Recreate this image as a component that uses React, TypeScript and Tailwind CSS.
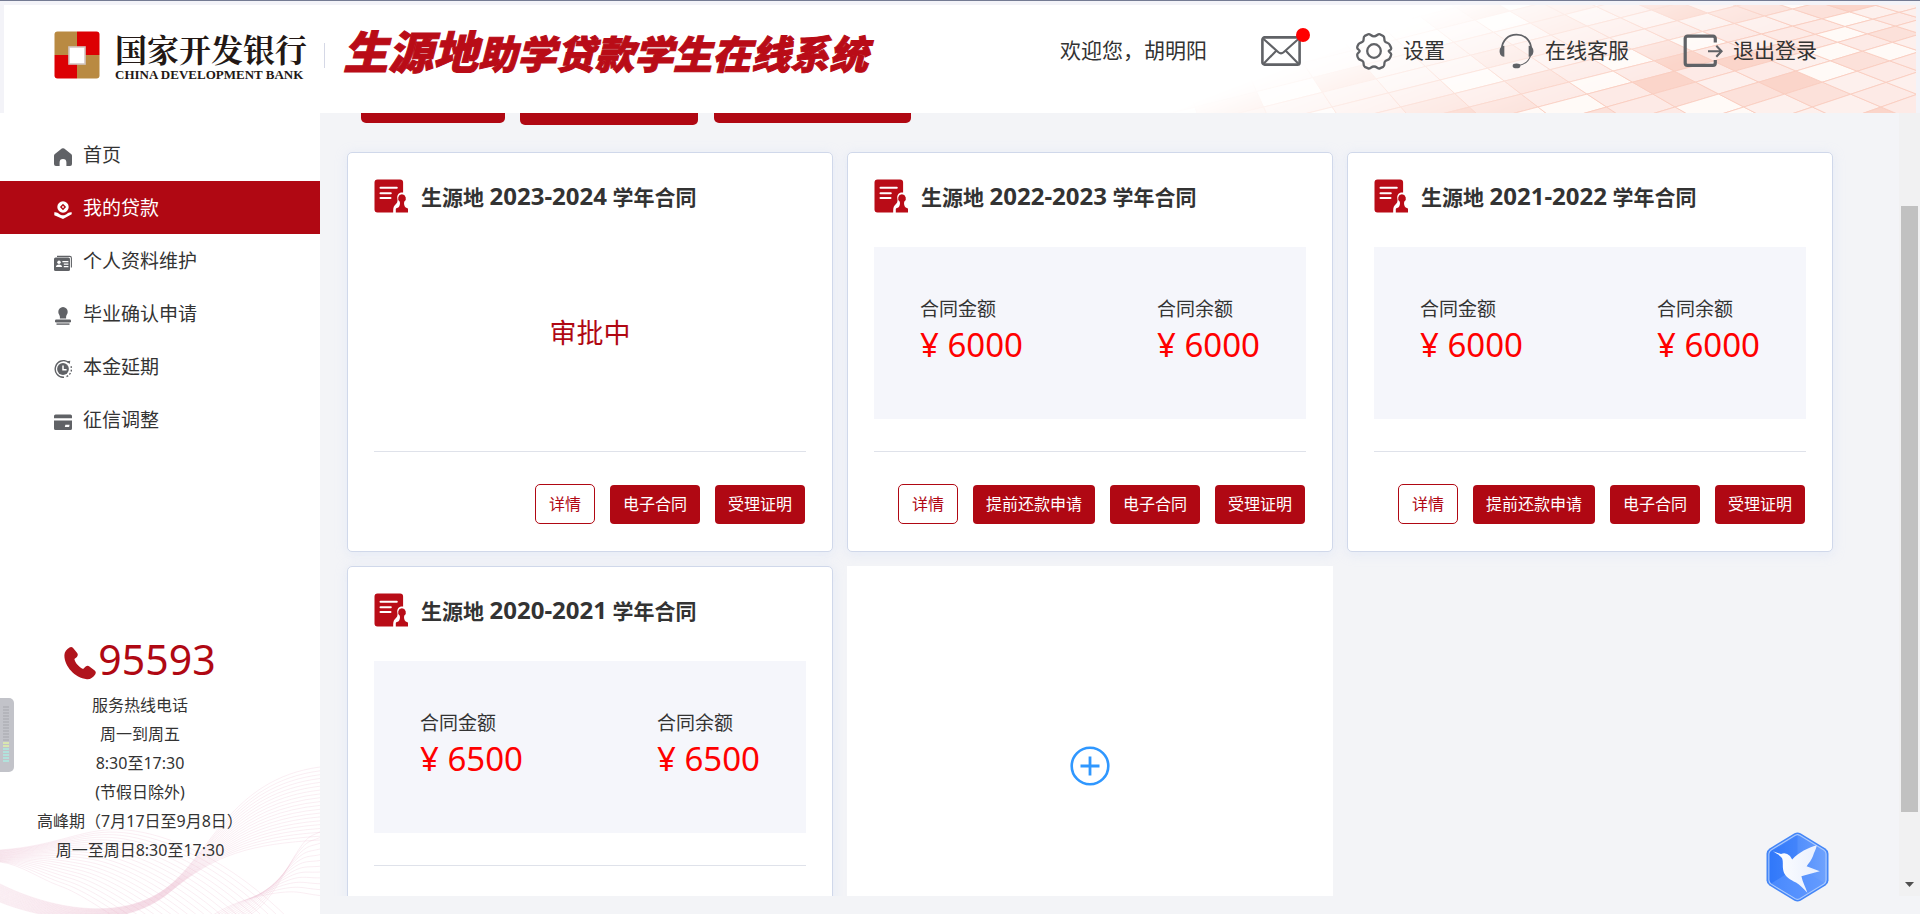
import React from "react";

const SANS =
  "font-['Noto_Sans','Noto_Sans_CJK_SC',sans-serif]";

type IconProps = { className?: string };

function BankLogo() {
  return (
    <svg viewBox="0 0 46 48" className="h-12 w-[46px] shrink-0" aria-hidden="true">
      <defs>
        <clipPath id="logoClip">
          <rect x="0.5" y="0.5" width="45" height="47" rx="3" />
        </clipPath>
      </defs>
      <g clipPath="url(#logoClip)">
        <rect width="23" height="24" fill="#b98a42" />
        <rect x="23" width="23" height="24" fill="#dc0003" />
        <rect y="24" width="23" height="24" fill="#dc0003" />
        <rect x="23" y="24" width="23" height="24" fill="#b98a42" />
      </g>
      <rect x="15" y="16" width="16" height="17" fill="#fff" stroke="#d3c6c2" strokeWidth="1.6" />
    </svg>
  );
}

function MailIcon() {
  return (
    <svg viewBox="0 0 40 30" className="h-[30px] w-10" fill="none" stroke="#606266" strokeWidth="2.6" aria-hidden="true">
      <rect x="1.4" y="1.4" width="37.2" height="27.2" rx="2.2" />
      <path d="M2 2.5 17.4 16.2q2.6 2.2 5.2 0L38 2.5M2.3 28 15 15M37.7 28 25 15" strokeWidth="2.1" />
    </svg>
  );
}

function GearIcon() {
  return (
    <svg viewBox="0 0 38 38" className="h-[38px] w-[38px]" fill="none" stroke="#606266" strokeWidth="2.3" strokeLinejoin="round" aria-hidden="true">
      <path d="M13.2 2.2C15.2 1.4 16 4.3 19 4.3s3.800-2.900 5.800-2.100l3.400 1.800c2 1.400.6 3.400 1.600 5.200s3.600 1.400 4.700 3.300c.9 1.600 1.500 2.500 1.700 3.800.2 2.100-2.500 1.700-2.500 2.700s2.700 2.100 2.500 3.700c-.2 1.500-.8 2.600-1.700 4-1.100 1.800-3.700 1.200-4.700 3s.4 3.900-1.600 5.200l-3.400 1.500c-2 .8-2.800-1.900-5.800-1.900s-3.800 2.700-5.800 1.900l-3.400-1.500c-2-1.300-.6-3.400-1.600-5.200s-3.600-1.200-4.700-3c-.9-1.400-1.300-2.500-1.300-4 0-1.600 2.500-2.500 2.500-3.700s-2.500-1.600-2.500-3.200c0-1.400.5-2.300 1.300-3.600 1.100-1.800 3.700-1.400 4.700-3.100s-.4-3.700 1.600-5.200z" />
      <circle cx="19" cy="19" r="6.8" />
    </svg>
  );
}

function HeadsetIcon() {
  return (
    <svg viewBox="0 0 36 36" className="h-9 w-[35px]" fill="none" stroke="#606266" aria-hidden="true">
      <path d="M3 16C3 7 9.500 1.200 18 1.200S33 7 33 16" strokeWidth="1.900" />
      <path d="M32.500 22.500C31 28 27 31.500 20.500 33" strokeWidth="1.100" />
      <path d="M5.500 12.500v11.300C2 24 .6 21 .6 18s1.600-5.300 4.900-5.500zM30.500 12.500v11.300c3.500.2 4.900-2.800 4.900-5.800s-1.600-5.300-4.900-5.500z" fill="#606266" stroke="none" />
      <ellipse cx="18" cy="33.300" rx="4" ry="2.400" fill="#606266" stroke="none" />
    </svg>
  );
}

function LogoutIcon() {
  return (
    <svg viewBox="0 0 40 34" className="h-[34px] w-10" fill="none" stroke="#606266" aria-hidden="true">
      <path d="M32.300 8.500V4.500Q32.300 2.200 30 2.200H4.500Q2.200 2.200 2.200 4.500v24.600q0 2.300 2.300 2.300H30q2.300 0 2.300-2.300V26" strokeWidth="3.200" />
      <path d="M25 17.300h13M33.300 11.800l5.300 5.500-5.300 5.500" strokeWidth="2.100" />
    </svg>
  );
}

function HomeIcon({ className }: IconProps) {
  return (
    <svg viewBox="0 0 18 18" className={className} fill="currentColor" aria-hidden="true">
      <path d="M7.800.6q1.200-.9 2.400 0l6.900 5.300q.9.700.9 1.800v8.300q0 2-2 2h-3.600v-3.600a3.400 3.400 0 0 0-6.800 0V18H2q-2 0-2-2V7.700q0-1.100.9-1.800z" />
    </svg>
  );
}
function LoanIcon({ className }: IconProps) {
  return (
    <svg viewBox="0 0 18 18" className={className} fill="currentColor" aria-hidden="true">
      <path fillRule="evenodd" d="M9 .3a5.700 5.700 0 1 1 0 11.400A5.700 5.700 0 0 1 9 .3zm0 2.500L5.900 6l3.100 3.200L12.100 6z" />
      <path d="M9 4.800 10.200 6 9 7.200 7.800 6z" />
      <path d="M.3 11.300c2.400-.3 3.600.6 4.900 1.700 2.200 1.800 5.400 1.800 7.600 0 1.300-1.100 2.500-2 4.900-1.700v1.900L9 17.900.3 14.200z" />
    </svg>
  );
}
function IdCardIcon({ className }: IconProps) {
  return (
    <svg viewBox="0 0 18 18" className={className} aria-hidden="true">
      <path d="M3 2.400h12.800q1.600 0 1.600 1.600v9.500" fill="none" stroke="currentColor" strokeWidth="1.100" />
      <rect y="3.600" width="16" height="13.400" rx="1.600" fill="currentColor" />
      <g fill="#fff">
        <circle cx="5" cy="8.300" r="1.700" />
        <path d="M1.900 13q.2-2.600 3.100-2.600T8.100 13z" />
        <path d="M8.400 7h6v1.200h-6zM9.800 9.500h4.600v1.200H9.800zM9.800 12h4.600v1.200H9.800z" />
      </g>
    </svg>
  );
}
function StampIcon({ className }: IconProps) {
  return (
    <svg viewBox="0 0 18 18" className={className} fill="currentColor" aria-hidden="true">
      <path d="M9 0a4.900 4.900 0 0 1 4.700 5c0 2.200-1.600 3.200-1.600 4.800v1.700H5.900V9.800C5.900 8.200 4.300 7.200 4.300 5A4.900 4.900 0 0 1 9 0z" />
      <rect x="1" y="12.500" width="16" height="3" rx="1.200" />
      <rect x="2.500" y="16.400" width="13" height="1.400" />
    </svg>
  );
}
function DelayIcon({ className }: IconProps) {
  return (
    <svg viewBox="0 0 18 18" className={className} aria-hidden="true">
      <path d="M14.800 2.600A8.300 8.300 0 1 0 10 17.300" fill="none" stroke="currentColor" strokeWidth="1.400" />
      <path d="M13 1.200 16.300.700l-.6 3.400z" fill="currentColor" />
      <path d="M17 6.200A8.300 8.300 0 0 1 11 17.100" fill="none" stroke="currentColor" strokeWidth="1.400" strokeDasharray="1.800 1.700" />
      <circle cx="9" cy="9" r="5.900" fill="currentColor" />
      <path d="M9 5.500v4.300h3.600" fill="none" stroke="#fff" strokeWidth="1.500" />
    </svg>
  );
}
function CreditIcon({ className }: IconProps) {
  return (
    <svg viewBox="0 0 18 18" className={className} fill="currentColor" aria-hidden="true">
      <path d="M1.600 1.500h14.800q1.600 0 1.600 1.600v2.200H0V3.100q0-1.600 1.600-1.600z" />
      <path fillRule="evenodd" d="M0 7.500h18v7.900q0 1.600-1.600 1.600H1.600Q0 17 0 15.400zm11.400 4.300-.6 2.300h4.300l.5-2.300z" />
    </svg>
  );
}

function ContractIcon() {
  return (
    <svg viewBox="0 0 34 34" className="h-[34px] w-[34px] shrink-0" aria-hidden="true">
      <path d="M3.500.4h22.600q3 0 3 3v10.200c-3.900-.6-6.500 2.200-5.700 6.200.5 3.200-.4 4.600-2.600 6.400-1.500 1.300-1.700 4-1.600 7.400H3.500q-3 0-3-3V3.400q0-3 3-3z" fill="#b90c17" />
      <path d="M6.500 8.700h16.300M6.500 14.200h10.300M6.500 19h10" stroke="#fff" strokeWidth="2" strokeLinecap="round" />
      <path d="M27.900 15.300a4.100 4.100 0 0 1 2.300 7.400c-.5 2.200.2 4.600 1.500 5.700l1.900.9q.4.300.4.900v3.400H21.800v-3.400q0-.6.5-.9l2-.9c1.400-1.100 2-3.500 1.500-5.700a4.100 4.100 0 0 1 2.100-7.400z" fill="#b90c17" />
    </svg>
  );
}

function PhoneIcon() {
  return (
    <svg viewBox="0 0 32 33" className="mt-2 h-[33px] w-8 shrink-0" aria-hidden="true">
      <path d="M5.500.6q2-1.300 3.800.7l3.900 4.800q1.300 2-.3 3.800l-2.500 2.200c.7 3.900 4.700 8.400 8.700 9.800l2.600-2.300q1.800-1.500 3.700-.2l5.300 4q1.800 1.700.6 3.900c-1.800 3-5 5.300-8.400 5C10.500 30.800 0 19 .4 8 .5 5 2.600 2.300 5.500.6z" fill="#b0141c" />
    </svg>
  );
}

function BirdBadge() {
  return (
    <svg viewBox="0 0 63 70" className="h-[70px] w-[63px]" aria-hidden="true">
      <defs>
        <linearGradient id="hexFill" x1="0" x2="1">
          <stop offset="0" stopColor="#337bfb" />
          <stop offset="1" stopColor="#6fa2fd" />
        </linearGradient>
        <linearGradient id="birdFill" x1="0" x2="1">
          <stop offset="0" stopColor="#ffffff" />
          <stop offset="1" stopColor="#e8effe" />
        </linearGradient>
      </defs>
      <path d="M28.500 1.200q3-1.500 6 0l25 15.200q3 2 3 5.300v26.500q0 3.300-3 5.300l-25 15.300q-3 1.500-6 0l-25-15.300q-3-2-3-5.300V21.700q0-3.300 3-5.300z" fill="#4486f7" />
      <path d="M29.300 3.200q2.200-1 4.400 0l24.200 14.700q2.200 1.500 2.200 4v26.100q0 2.500-2.200 4L33.700 66.800q-2.200 1-4.400 0L5.100 52q-2.200-1.500-2.200-4V21.900q0-2.500 2.200-4z" fill="url(#hexFill)" stroke="#a9c8fd" strokeWidth="1.200" />
      <path d="M31.500 3v32L5 51.500 3.500 48V21.500z" fill="#2c74f8" opacity=".35" />
      <path d="M31.500 35 58 51 31.500 67 5 51.500z" fill="#5b95ff" opacity=".5" />
      <path d="M6.800 19.300 15 22q5-2 9 2l2.200 3.500C33 20 42 16 50.800 13.300c-.6 4-2.800 7-3.800 10.700-1.500 4-4 7-6.400 10.200L53.800 39.300c-6.500 1.800-12.500 3-18.400 5 1.200 6 4 10.500 6 16.400C37.500 56.500 34 53 30 50.500c-6-3-10.500-5.500-12.300-10.500C16 34.500 17.500 31 16.300 26.800 14.500 23 10 21.500 6.800 19.300z" fill="url(#birdFill)" />
    </svg>
  );
}

/** Perspective tile pattern on the right of the header. */
function TilePattern() {
  // Two families of lines leave the baseline y = 102 at regular steps; each tile
  // corner is the crossing of one line of each family.
  const base = (n: number) => 45 + 68.6 * n;
  const corner = (i: number, j: number): [number, number] => {
    const xa = base(i);
    const xb = base(j);
    const m = 0.66 + 0.0031 * Math.max(-100, xa - 182);
    const s = Math.max(0.25, 0.26 + 0.00026 * (xb - 380));
    const x = (xa + s * m * xb) / (1 + s * m);
    return [Math.round(x * 10) / 10, Math.round((102 - s * (x - xb)) * 10) / 10];
  };
  const cells: React.ReactElement[] = [];
  for (let j = -9; j < 13; j++) {
    for (let i = Math.max(j - 2, -2); i < 32; i++) {
      const q = [corner(i, j), corner(i + 1, j), corner(i + 1, j + 1), corner(i, j + 1)];
      const n = Math.abs(Math.sin(i * 12.9898 + j * 78.233) * 43758.5453);
      const h = Math.floor((n - Math.floor(n)) * 14);
      const fill =
        h === 0 ? "#fbd5ca" : h < 3 ? "#fce1da" : h < 7 ? "#fdeae6" : h < 11 ? "#fdf0ed" : "#fffaf7";
      cells.push(
        <polygon key={`${i}/${j}`} points={q.map((p) => p.join(",")).join(" ")} fill={fill} stroke="#f9cdbf" strokeWidth="0.9" />
      );
    }
  }
  return (
    <svg viewBox="0 0 766 108" className="absolute right-0 top-0 h-full w-[766px]" preserveAspectRatio="none" aria-hidden="true">
      <defs>
        <linearGradient id="tileFade" gradientUnits="userSpaceOnUse" x1="38" y1="98" x2="88" y2="228">
          <stop offset="0" stopColor="#000" />
          <stop offset="1" stopColor="#fff" />
        </linearGradient>
        <mask id="tileMask" maskUnits="userSpaceOnUse" x="0" y="0" width="766" height="108">
          <rect width="766" height="108" fill="url(#tileFade)" />
        </mask>
      </defs>
      <g mask="url(#tileMask)">{cells}</g>
    </svg>
  );
}

/** Draws lines evenly spread between two curves given as "x y" number lists. */
function blend(from: number[], to: number[], t: number) {
  const p = from.map((v, n) => Math.round((v + (to[n] - v) * t) * 10) / 10);
  return `M${p[0]} ${p[1]}C${p[2]} ${p[3]} ${p[4]} ${p[5]} ${p[6]} ${p[7]}S${p[8]} ${p[9]} ${p[10]} ${p[11]}`;
}

const waveBundles = [
  {
    count: 22,
    from: [0, 116, 60, 112, 85, 92, 127, 96, 230, 126, 290, 186],
    to: [0, 128, 20, 130, 40, 145, 60, 152, 110, 180, 140, 200],
  },
  {
    count: 20,
    from: [0, 150, 50, 175, 120, 188, 165, 155, 230, 45, 320, 33],
    to: [0, 168, 50, 188, 125, 196, 170, 158, 250, 110, 320, 106],
  },
  {
    count: 12,
    from: [230, 190, 260, 180, 270, 165, 290, 130, 310, 105, 325, 95],
    to: [200, 190, 220, 175, 240, 165, 270, 160, 300, 160, 325, 162],
  },
];

function Waves() {
  return (
    <svg viewBox="0 0 320 180" className="absolute bottom-0 left-0 h-[180px] w-full" preserveAspectRatio="none" fill="none" stroke="#e8b0c8" strokeOpacity="0.28" strokeWidth="0.8" aria-hidden="true">
      {waveBundles.map(({ count, from, to }, b) =>
        Array.from({ length: count }, (_, k) => <path key={`${b}-${k}`} d={blend(from, to, k / (count - 1))} />)
      )}
    </svg>
  );
}

const navItems = [
  { label: "首页", Icon: HomeIcon, active: false },
  { label: "我的贷款", Icon: LoanIcon, active: true },
  { label: "个人资料维护", Icon: IdCardIcon, active: false },
  { label: "毕业确认申请", Icon: StampIcon, active: false },
  { label: "本金延期", Icon: DelayIcon, active: false },
  { label: "征信调整", Icon: CreditIcon, active: false },
];

type Contract = { years: string; amount: string | null; actions: string[] };

const contracts: Contract[] = [
  { years: "2023-2024", amount: null, actions: ["电子合同", "受理证明"] },
  { years: "2022-2023", amount: "6000", actions: ["提前还款申请", "电子合同", "受理证明"] },
  { years: "2021-2022", amount: "6000", actions: ["提前还款申请", "电子合同", "受理证明"] },
  { years: "2020-2021", amount: "6500", actions: [] },
];

function Header() {
  return (
    <header className="shrink-0 border-t border-[#747b93] bg-[#f3f3f8] pt-1 pr-1">
      <div className="relative ml-1 flex h-[108px] items-center justify-between bg-white pl-[50px] pr-[99px]">
        <TilePattern />
        <div className="relative flex items-center pb-2">
          <BankLogo />
          <div className="ml-[15px] flex flex-col">
            <span className="font-['Noto_Serif_CJK_SC','Noto_Sans_CJK_SC',serif] text-[32px] leading-[40px] font-bold text-[#231815]">
              国家开发银行
            </span>
            <span className="font-['Liberation_Serif',serif] text-[13px] leading-[14px] font-bold text-[#231815]">
              CHINA DEVELOPMENT BANK
            </span>
          </div>
          <span className="ml-[17px] h-[25px] w-px bg-[#d5d8e6]" />
          <h1 className="ml-[18px] flex items-baseline pb-2 font-['Noto_Sans_CJK_SC',sans-serif] leading-[48px] font-black whitespace-nowrap text-[#b90c17] italic [-webkit-text-stroke:1px_#b90c17]">
            <span className="text-[45px]">生源地</span>
            <span className="text-[39px]">助学贷款学生在线系统</span>
          </h1>
        </div>
        <nav className="relative flex items-center gap-[54px] pb-4 text-[21px] whitespace-nowrap text-[#333]">
          <span>欢迎您，胡明阳</span>
          <a href="#mail" aria-label="消息" className="relative">
            <MailIcon />
            <span className="absolute -top-2 -right-[9px] size-[14px] rounded-full bg-[#ff0000]" />
          </a>
          <a href="#settings" className="flex items-center gap-[10px]">
            <GearIcon />
            设置
          </a>
          <a href="#service" className="flex items-center gap-[11px]">
            <HeadsetIcon />
            在线客服
          </a>
          <a href="#logout" className="flex items-center gap-[10px]">
            <LogoutIcon />
            退出登录
          </a>
        </nav>
      </div>
    </header>
  );
}

function Sidebar() {
  return (
    <aside className="relative flex w-80 shrink-0 flex-col justify-between overflow-hidden bg-white pt-[15px] pb-[49px]">
      <Waves />
      <nav className="relative flex flex-col">
        {navItems.map(({ label, Icon, active }) => (
          <a
            key={label}
            href="#menu"
            className={
              active
                ? "flex h-[53px] items-center gap-[11px] bg-[#b00813] pt-[2px] pl-[54px] text-[19px] text-white"
                : "flex h-[53px] items-center gap-[11px] pt-[2px] pl-[54px] text-[19px] text-[#333]"
            }
          >
            <Icon className={active ? "mt-[2px] size-[18px] text-white" : "mt-[2px] size-[18px] text-[#606266]"} />
            {label}
          </a>
        ))}
      </nav>
      <div className="relative flex w-[280px] flex-col items-center text-[16px] leading-[29px] text-[#333]">
        <div className="mb-1 flex items-center gap-[2px] text-[41px] leading-[56px] text-[#b00813]">
          <PhoneIcon />
          <span>95593</span>
        </div>
        <p>服务热线电话</p>
        <p>周一到周五</p>
        <p>8:30至17:30</p>
        <p>(节假日除外)</p>
        <p>高峰期（7月17日至9月8日）</p>
        <p>周一至周日8:30至17:30</p>
      </div>
      <div className="absolute top-[585px] left-0 flex h-[74px] w-[14px] flex-col items-start gap-px rounded-r-[5px] bg-[#c2c3c9] pt-2 pl-[3px]">
        {Array.from({ length: 19 }, (_, i) => (
          <span
            key={i}
            className={
              i < 12 ? "h-[2px] w-[6px] bg-[#b4b5bb]" : i < 14 ? "h-[2px] w-[6px] bg-[#d9e6b0]" : "h-[2px] w-[6px] bg-[#b2e2dc]"
            }
          />
        ))}
      </div>
    </aside>
  );
}

function Amount({ label, value }: { label: string; value: string }) {
  return (
    <div className="flex flex-col">
      <span className="text-[19px] leading-7 text-[#333]">{label}</span>
      <span className="text-[33px] leading-[44px] text-[#ff0000]">¥ {value}</span>
    </div>
  );
}

function ContractCard({ years, amount, actions }: Contract) {
  return (
    <article className="flex h-[400px] flex-col rounded-[5px] border border-[#d0d8ea] bg-white px-[26px] pt-[26px] shadow-[0_2px_12px_rgba(200,215,245,0.35)]">
      <div className="flex h-[34px] items-center gap-[13px]">
        <ContractIcon />
        <h2 className="text-[21px] leading-[34px] font-bold whitespace-nowrap text-[#333]">
          生源地 <span className="text-[24px]">{years}</span> 学年合同
        </h2>
      </div>
      {amount ? (
        <div className="mt-[34px] flex h-[172px] items-center justify-between bg-[#f5f6fb] pr-[46px] pb-[4px] pl-[46px]">
          <Amount label="合同金额" value={amount} />
          <Amount label="合同余额" value={amount} />
        </div>
      ) : (
        <div className="mt-[34px] flex h-[172px] items-center justify-center text-[27px] text-[#b00813]">审批中</div>
      )}
      <hr className="mt-8 border-t border-[#dfe2ea]" />
      {actions.length > 0 && (
        <div className="mt-8 flex items-center justify-end gap-[15px] pr-px text-[16px] whitespace-nowrap">
          <button className="h-10 rounded-[5px] border border-[#b00813] bg-white px-[13px] text-[#b00813]">详情</button>
          {actions.map((a) => (
            <button key={a} className="h-[39px] rounded-[4px] bg-[#b00813] px-[13px] text-white">
              {a}
            </button>
          ))}
        </div>
      )}
    </article>
  );
}

export default function App() {
  return (
    <div className={`${SANS} flex h-screen flex-col overflow-hidden bg-[#f3f4f7]`}>
      <Header />
      <div className="flex min-h-0 flex-1">
        <Sidebar />
        <div className="relative flex min-w-0 flex-1 pb-[18px]">
          <main className="min-w-0 flex-1 overflow-hidden pr-[66px] pl-[27px]">
            <div className="flex h-[39px] items-start pl-[14px]">
              <button aria-hidden="true" tabIndex={-1} className="h-[10px] w-[144px] rounded-b-[5px] bg-[#b00813]" />
              <button aria-hidden="true" tabIndex={-1} className="ml-[15px] h-3 w-[178px] rounded-b-[5px] bg-[#b00813]" />
              <button aria-hidden="true" tabIndex={-1} className="ml-4 h-[10px] w-[197px] rounded-b-[5px] bg-[#b00813]" />
            </div>
            <div className="grid grid-cols-3 gap-[14px]">
              {contracts.map((c) => (
                <ContractCard key={c.years} {...c} />
              ))}
              <button aria-label="新增" className="flex h-[400px] items-center justify-center bg-white">
                <svg viewBox="0 0 40 40" className="size-10" fill="none" stroke="#2f97ff" aria-hidden="true">
                  <circle cx="20" cy="20" r="18.300" strokeWidth="2.600" />
                  <path d="M20 10.500v19M10.500 20h19" strokeWidth="2.800" />
                </svg>
              </button>
            </div>
          </main>
          <div className="flex w-[21px] shrink-0 flex-col items-center bg-[#f1f1f2] pt-[93px]" aria-hidden="true">
            <div className="h-[606px] w-[17px] bg-[#c1c1c1]" />
            <svg viewBox="0 0 9 5" className="mt-auto mb-[9px] h-[5px] w-[9px] shrink-0">
              <path d="M0 0h9L4.500 5z" fill="#505050" />
            </svg>
          </div>
          <button aria-label="助手" className="absolute right-[91px] bottom-3">
            <BirdBadge />
          </button>
        </div>
      </div>
    </div>
  );
}
